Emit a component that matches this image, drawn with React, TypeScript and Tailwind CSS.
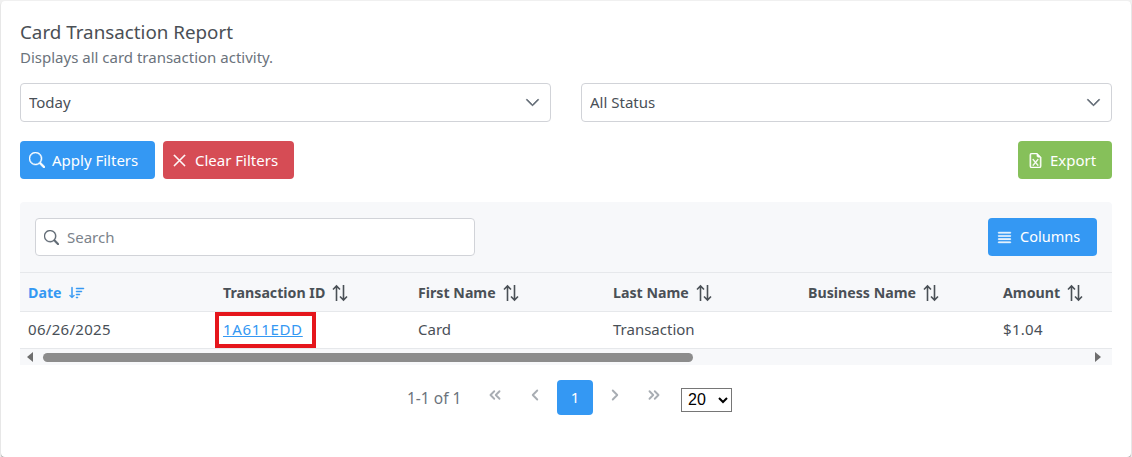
import { ChevronsLeft, ChevronLeft, ChevronRight, ChevronsRight } from "lucide-react"
import { BsSearch, BsXLg, BsJustify, BsFileEarmarkExcel, BsSortDown, BsChevronDown } from "react-icons/bs"

const columns = ["Transaction ID", "First Name", "Last Name", "Business Name", "Amount"]

function SortIcon() {
  return (
    <svg viewBox="0 0 16 18" className="h-[18px] w-[16px]" fill="none" stroke="currentColor" strokeWidth="1.6">
      <path d="M4.5 17V2M1 5.5 4.5 2 8 5.5" />
      <path d="M11.5 1v15M8 12.5l3.5 3.5 3.5-3.5" />
    </svg>
  )
}

function FilterSelect({ value }: { value: string }) {
  return (
    <div className="relative flex-1">
      <select className="block h-[39px] w-full appearance-none rounded-[4px] border border-[#d1d3d8] bg-white pl-2 text-[15px] text-[#495057]">
        <option>{value}</option>
      </select>
      <BsChevronDown className="pointer-events-none absolute right-[11px] top-[12px] h-[15px] w-[15px] text-[#5c6670]" strokeWidth={0.8} />
    </div>
  )
}

function HeaderCell({ label }: { label: string }) {
  return (
    <div className="flex w-[195px] shrink-0 items-center gap-[7px] pl-2 pt-px text-[14.2px] font-bold text-[#4a5056]">
      {label}
      <SortIcon />
    </div>
  )
}

export default function App() {
  return (
    <div className="h-[457px] w-[1132px] overflow-hidden bg-[#f0f0f0] font-['Noto_Sans',sans-serif] text-[15px] text-[#495057]">
      <div className="mx-px mt-px h-[456px] w-[1130px] rounded-[4px] bg-white px-[19px] pt-[19px] shadow-[0_1px_1px_#999]">
        <h1 className="text-[18.8px] leading-[24px] text-[#4a4f55]">Card Transaction Report</h1>
        <p className="mt-[3px] text-[15px] leading-[20px] text-[#6b737c]">Displays all card transaction activity.</p>

        <div className="mt-[16px] flex gap-[30px]">
          <FilterSelect value="Today" />
          <FilterSelect value="All Status" />
        </div>

        <div className="mt-[19px] flex h-[38px] gap-2">
          <button className="flex w-[135px] items-center gap-[7px] rounded-[4px] bg-[#3498f3] pl-[9px] text-white">
            <BsSearch className="h-[16px] w-[16px]" strokeWidth={0.5} />
            Apply Filters
          </button>
          <button className="flex w-[131px] items-center gap-[8px] rounded-[4px] bg-[#d64c55] pl-[9px] text-white">
            <BsXLg className="h-[15px] w-[15px]" strokeWidth={0.7} />
            Clear Filters
          </button>
          <button className="ml-auto flex w-[94px] items-center gap-[7px] rounded-[4px] bg-[#86c05a] pl-[10px] text-white">
            <BsFileEarmarkExcel className="h-[15px] w-[15px]" strokeWidth={0.6} />
            Export
          </button>
        </div>

        <div className="mt-[23px] overflow-hidden rounded-t-[4px] bg-[#f7f8fa]">
          <div className="flex h-[70px] items-start justify-between px-[15px] pt-4">
            <div className="flex h-[38px] w-[440px] items-center gap-[8px] rounded-[4px] border border-[#d1d3d8] bg-white pl-2 text-[#7b838b]">
              <BsSearch className="h-[15px] w-[15px] text-[#5c6670]" strokeWidth={0.4} />
              Search
            </div>
            <button className="flex h-[38px] w-[109px] items-center gap-[7px] rounded-[4px] bg-[#3498f3] pl-[8px] text-[14.5px] text-white">
              <BsJustify className="h-[17px] w-[17px]" strokeWidth={0.5} />
              Columns
            </button>
          </div>

          <div className="flex h-[40px] border-y border-[#e6e8eb]">
            <div className="flex w-[195px] shrink-0 items-center gap-[7px] pl-2 pt-px text-[14.2px] font-bold text-[#3498f3]">
              Date
              <BsSortDown className="h-[16px] w-[16px]" strokeWidth={0.5} />
            </div>
            {columns.map((c) => (
              <HeaderCell key={c} label={c} />
            ))}
          </div>

          <div className="flex h-[37px] items-center border-b border-[#e6e8eb] bg-white pb-px">
            <div className="w-[195px] shrink-0 pl-2 tracking-[0.3px]">06/26/2025</div>
            <div className="w-[195px] shrink-0 pl-2">
              <span className="relative inline-block">
                <a className="tracking-[0.7px] text-[#3498f3] underline" href="#">1A611EDD</a>
                <span className="absolute -left-[8px] -right-[13px] -top-[6px] -bottom-[7px] border-4 border-[#e5161c]" />
              </span>
            </div>
            <div className="w-[195px] shrink-0 pl-2">Card</div>
            <div className="w-[195px] shrink-0 pl-2">Transaction</div>
            <div className="w-[195px] shrink-0 pl-2" />
            <div className="w-[117px] shrink-0 pl-2 tracking-[0.3px]">$1.04</div>
          </div>

          <div className="flex h-[16px] items-center bg-[#f7f8fa] pl-[7px] pr-[11px]">
            <span className="h-0 w-0 border-y-[5px] border-r-[6px] border-y-transparent border-r-[#6e6e6e]" />
            <span className="ml-[10px] h-[9px] w-[650px] rounded-full bg-[#8c8c8c]" />
            <span className="ml-auto h-0 w-0 border-y-[5px] border-l-[6px] border-y-transparent border-l-[#6e6e6e]" />
          </div>
        </div>

        <div className="ml-[387px] mt-[15px] flex h-[35px] items-center">
          <span className="w-[70px] translate-y-[1px] text-[15.5px] text-[#6b737c]">1-1 of 1</span>
          <ChevronsLeft className="ml-[9px] h-[18px] w-[18px] -translate-y-[3px] text-[#a8adb3]" strokeWidth={2.5} />
          <ChevronLeft className="ml-[22px] h-[18px] w-[18px] -translate-y-[3px] text-[#a8adb3]" strokeWidth={2.5} />
          <span className="ml-[13px] flex h-[35px] w-[36px] items-center justify-center rounded-[4px] bg-[#3498f3] text-white">1</span>
          <ChevronRight className="ml-[13px] h-[18px] w-[18px] -translate-y-[3px] text-[#a8adb3]" strokeWidth={2.5} />
          <ChevronsRight className="ml-[21px] h-[18px] w-[18px] -translate-y-[3px] text-[#a8adb3]" strokeWidth={2.5} />
          <select className="ml-[18px] h-[24px] w-[51px] translate-y-[2px] border border-[#767676] bg-white pl-[2px] font-['Liberation_Sans',sans-serif] text-[16px] text-black [appearance:auto]">
            <option>20</option>
          </select>
        </div>
      </div>
    </div>
  )
}
